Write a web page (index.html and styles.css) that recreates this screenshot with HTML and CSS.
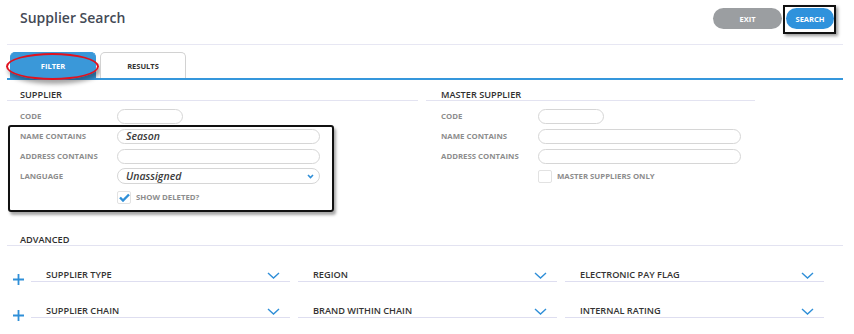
FILE: index.html
```html
<!DOCTYPE html>
<html>
<head>
<meta charset="utf-8">
<link rel="stylesheet" href="styles.css">
</head>
<body>
<div class="page">
  <header class="topbar">
    <h1 class="title">Supplier Search</h1>
    <div class="actions">
      <button class="btn btn-exit">EXIT</button>
      <button class="btn btn-search">SEARCH</button>
    </div>
  </header>

  <nav class="tabs">
    <div class="tab tab-active">FILTER<span class="ring"></span></div>
    <div class="tab">RESULTS</div>
  </nav>

  <section class="filters">
    <div class="col col-supplier">
      <h2 class="heading">SUPPLIER</h2>
      <div class="rows">
        <div class="row"><span class="label">CODE</span><span class="input input-short"></span></div>
        <div class="row"><span class="label">NAME CONTAINS</span><span class="input input-long"><span class="value">Season</span></span></div>
        <div class="row"><span class="label">ADDRESS CONTAINS</span><span class="input input-long"></span></div>
        <div class="row"><span class="label">LANGUAGE</span><span class="input input-long select"><span class="value">Unassigned</span>
          <svg class="sel-chev" width="7" height="5" viewBox="0 0 7 5"><path d="M1 1 L3.5 3.5 L6 1" fill="none" stroke="#2f8fd8" stroke-width="1.6"/></svg></span></div>
        <div class="row row-check"><span class="label"></span><span class="checkbox"><svg width="11" height="9" viewBox="0 0 11 9"><path d="M1 4.5 L4 7.5 L10 1.5" fill="none" stroke="#2f8fd8" stroke-width="2.4"/></svg></span><span class="check-text">SHOW DELETED?</span></div>
      </div>
      <span class="mark-box"></span>
    </div>
    <div class="col col-master">
      <h2 class="heading">MASTER SUPPLIER</h2>
      <div class="rows">
        <div class="row"><span class="label">CODE</span><span class="input input-short"></span></div>
        <div class="row"><span class="label">NAME CONTAINS</span><span class="input input-long"></span></div>
        <div class="row"><span class="label">ADDRESS CONTAINS</span><span class="input input-long"></span></div>
        <div class="row row-check2"><span class="label"></span><span class="checkbox"></span><span class="check-text">MASTER SUPPLIERS ONLY</span></div>
      </div>
    </div>
  </section>

  <section class="advanced">
    <h2 class="heading heading-adv">ADVANCED</h2>
    <div class="adv-row">
      <svg class="plus" width="11" height="11" viewBox="0 0 11 11"><path d="M5.5 0 V11 M0 5.5 H11" stroke="#2f8fd8" stroke-width="1.8"/></svg>
      <div class="cell"><span>SUPPLIER TYPE</span><svg class="chev" width="13" height="7" viewBox="0 0 13 7"><path d="M1 1 L6.5 6 L12 1" fill="none" stroke="#2f8fd8" stroke-width="1.4"/></svg></div>
      <div class="cell"><span>REGION</span><svg class="chev" width="13" height="7" viewBox="0 0 13 7"><path d="M1 1 L6.5 6 L12 1" fill="none" stroke="#2f8fd8" stroke-width="1.4"/></svg></div>
      <div class="cell"><span>ELECTRONIC PAY FLAG</span><svg class="chev" width="13" height="7" viewBox="0 0 13 7"><path d="M1 1 L6.5 6 L12 1" fill="none" stroke="#2f8fd8" stroke-width="1.4"/></svg></div>
    </div>
    <div class="adv-row">
      <svg class="plus" width="11" height="11" viewBox="0 0 11 11"><path d="M5.5 0 V11 M0 5.5 H11" stroke="#2f8fd8" stroke-width="1.8"/></svg>
      <div class="cell"><span>SUPPLIER CHAIN</span><svg class="chev" width="13" height="7" viewBox="0 0 13 7"><path d="M1 1 L6.5 6 L12 1" fill="none" stroke="#2f8fd8" stroke-width="1.4"/></svg></div>
      <div class="cell"><span>BRAND WITHIN CHAIN</span><svg class="chev" width="13" height="7" viewBox="0 0 13 7"><path d="M1 1 L6.5 6 L12 1" fill="none" stroke="#2f8fd8" stroke-width="1.4"/></svg></div>
      <div class="cell"><span>INTERNAL RATING</span><svg class="chev" width="13" height="7" viewBox="0 0 13 7"><path d="M1 1 L6.5 6 L12 1" fill="none" stroke="#2f8fd8" stroke-width="1.4"/></svg></div>
    </div>
  </section>
</div>
</body>
</html>
```
FILE: styles.css
```css
* { box-sizing: border-box; }
html, body { margin: 0; padding: 0; background: #fff; }
body { font-family: "Open Sans", "Noto Sans", sans-serif; color: #333; width: 854px; height: 334px; overflow: hidden; }

.page { margin-left: 7px; width: 836px; }

.topbar {
  display: flex; justify-content: space-between; align-items: flex-start;
  height: 45px; border-bottom: 1px solid #e7e7f3;
  padding: 0 9px 0 13px;
}
.title { margin: 8px 0 0; font-size: 14px; line-height: 20px; font-weight: 600; color: #444a55; }
.actions { display: flex; gap: 4px; margin-top: 8px; }
.btn {
  border: none; height: 21px; border-radius: 11px; color: #fff;
  font-family: "Open Sans", sans-serif; font-weight: 700; font-size: 7.5px; padding: 0;
}
.btn-exit { width: 69px; background: #9b9ea1; }
.btn-search { position: relative; width: 48px; background: #2f92dc; }
.btn-search::after {
  content: ""; position: absolute; left: -3px; top: -3px; right: -2px; bottom: -5px;
  border: 2px solid #111; box-shadow: 2px 2px 3px rgba(0,0,0,0.4);
}

.tabs { display: flex; gap: 4px; padding-left: 3px; margin-top: 7px; border-bottom: 2px solid #3597dc; }
.tab {
  position: relative; width: 86px; height: 26px; display: flex; align-items: center; justify-content: center;
  font-size: 7.5px; font-weight: 700; color: #333; border: 1px solid #d2d2d2; border-bottom: none;
  border-radius: 5px 5px 0 0; background: #fff;
}
.tab-active { background: #3a98d9; border-color: #3a98d9; color: #fff; }
.ring {
  position: absolute; left: -5px; top: 0; width: 93px; height: 27px;
  border: 2px solid #e0121e; border-radius: 50%;
  box-shadow: 2px 4px 4px rgba(0,0,0,0.35);
}

.filters { display: flex; gap: 8px; }
.col { position: relative; }
.col-supplier { width: 411px; }
.col-master { width: 329px; }
.heading {
  margin: 0; padding: 9px 0 0 13px; font-size: 9.2px; line-height: 11px; font-weight: 600; color: #2f2f2f;
  border-bottom: 1px solid #e3e3f1;
}
.col-master .heading { padding-left: 15px; }
.rows { margin-top: 5px; }
.row { display: flex; align-items: center; height: 20px; }
.label { width: 110px; padding-left: 13px; font-size: 7.8px; font-weight: 700; color: #8d8d8d; flex: none; }
.col-master .label { width: 112px; padding-left: 15px; }
.input {
  display: flex; align-items: center; height: 15px; border: 1px solid #d6d6d6; border-radius: 8px; background: #fff; padding-left: 8px;
}
.input-short { width: 66px; }
.input-long { width: 203px; }
.select { height: 16px; justify-content: space-between; padding-right: 5px; }
.value { font-size: 10.5px; font-style: italic; font-weight: 600; color: #3a3a3a; }
.row-check { height: 14px; margin-top: 4px; }
.row-check2 { height: 14px; margin-top: 3px; }
.checkbox {
  width: 14px; height: 13px; border: 1px solid #e2e2e2; border-radius: 2px; display: flex; align-items: center; justify-content: center; flex: none;
}
.check-text { margin-left: 5px; font-size: 7.8px; font-weight: 700; color: #8d8d8d; }

.mark-box {
  position: absolute; left: 1px; top: 45px; width: 326px; height: 87px;
  border: 2px solid #111; border-radius: 3px;
  box-shadow: 2px 3px 3px rgba(0,0,0,0.35);
}

.advanced { margin-top: 30px; }
.heading-adv { padding-top: 0; }
.adv-row { display: flex; align-items: flex-end; margin-top: 23px; }
.adv-row + .adv-row { margin-top: 23px; }
.plus { margin: 0 7px -3px 6px; flex: none; }
.cell {
  width: 259px; margin-right: 8px; height: 13px; display: flex; justify-content: space-between; align-items: center;
  padding: 0 10px 0 15px; border-bottom: 1px solid #dedef0; font-size: 9.2px; font-weight: 600; color: #333; line-height: 12px;
}
.chev { flex: none; }
```
